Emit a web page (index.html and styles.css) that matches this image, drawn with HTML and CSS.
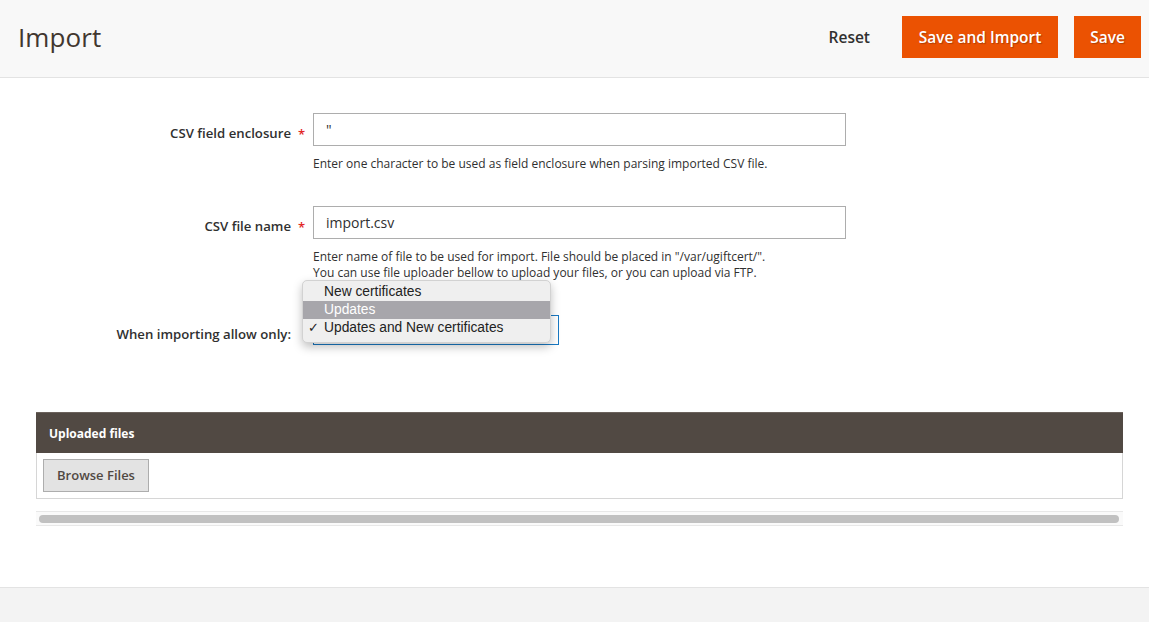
FILE: index.html
```html
<!DOCTYPE html>
<html lang="en">

<head>
    <meta charset="UTF-8">
    <meta name="viewport" content="width=device-width, initial-scale=1.0">
    <title>Import</title>
    <link rel="stylesheet" href="styles.css">
</head>

<body>
    <div id="page-header">
        <h1 class="page-title">Import</h1>
        <div class="page-actions">
            <span class="action-reset">Reset</span>
            <span class="action-primary">Save and Import</span>
            <span class="action-primary action-save">Save</span>
        </div>
    </div>

    <div id="content">
        <div class="field">
            <label class="field-label required">CSV field enclosure</label>
            <div class="field-control">
                <div class="input-text">"</div>
                <div class="note">Enter one character to be used as field enclosure when parsing imported CSV file.</div>
            </div>
        </div>

        <div class="field">
            <label class="field-label required">CSV file name</label>
            <div class="field-control">
                <div class="input-text">import.csv</div>
                <div class="note">Enter name of file to be used for import. File should be placed in "/var/ugiftcert/".<br>
                    You can use file uploader bellow to upload your files, or you can upload via FTP.</div>
            </div>
        </div>

        <div class="field field-select">
            <label class="field-label">When importing allow only:</label>
            <div class="field-control">
                <div class="select">
                    <ul class="select-menu">
                        <li>New certificates</li>
                        <li class="hover">Updates</li>
                        <li class="checked">Updates and New certificates</li>
                    </ul>
                </div>
            </div>
        </div>

        <div class="uploader">
            <div class="uploader-head">Uploaded files</div>
            <div class="uploader-body">
                <span class="btn-browse">Browse Files</span>
            </div>
            <div class="scroll-track">
                <div class="scroll-thumb"></div>
            </div>
        </div>
    </div>

    <div id="footer"></div>
</body>

</html>
```

FILE: styles.css
```css
* {
    margin: 0;
    padding: 0;
    box-sizing: border-box;
}

ul {
    list-style: none;
}

body {
    font-family: "Open Sans", "Liberation Sans", sans-serif;
    color: #303030;
    background: #fff;
    width: 1149px;
    height: 622px;
    overflow: hidden;
    display: flex;
    flex-direction: column;
}

#page-header {
    height: 78px;
    background: #f8f8f8;
    border-bottom: 1px solid #e3e3e3;
    display: flex;
    align-items: center;
    justify-content: space-between;
    padding: 0 8px 4px 18px;
}

.page-title {
    font-size: 26px;
    font-weight: 400;
    color: #41362f;
    letter-spacing: 0.1px;
}

.page-actions {
    display: flex;
    align-items: center;
}

.action-reset {
    font-size: 15.5px;
    font-weight: 600;
    color: #303030;
    margin-right: 32px;
}

.action-primary {
    display: inline-block;
    height: 42px;
    line-height: 42px;
    width: 156px;
    text-align: center;
    background: #eb5202;
    color: #fff;
    font-size: 15.5px;
    font-weight: 600;
    text-shadow: 1px 1px 1px rgba(0, 0, 0, 0.25);
}

.action-save {
    margin-left: 16px;
    width: 67px;
}

#content {
    flex: 1;
    padding: 35px 26px 0 36px;
}

.field {
    display: flex;
    margin-bottom: 34px;
}

.field-label {
    position: relative;
    width: 277px;
    padding-right: 22px;
    padding-top: 4px;
    text-align: right;
    font-size: 13.2px;
    font-weight: 600;
    line-height: 33px;
}

.field-label.required::after {
    content: "*";
    position: absolute;
    right: 8px;
    top: 5px;
    color: #e22626;
    font-size: 13px;
}

.field-control {
    width: 533px;
}

.input-text {
    height: 33px;
    border: 1px solid #adadad;
    padding: 0 12px;
    font-size: 14px;
    line-height: 31px;
}

.note {
    margin-top: 10px;
    font-size: 12px;
    line-height: 16px;
}

.field-select {
    margin-bottom: 0;
}

.field-select .field-label {
    padding-top: 3px;
}

.field-select .field-control {
    width: 246px;
}

.select {
    position: relative;
    width: 246px;
    height: 30px;
    border: 1px solid #1979c3;
}

.select-menu {
    position: absolute;
    left: -12px;
    top: -36px;
    width: 249px;
    padding: 2px 0 5px;
    background: #efefef;
    border: 1px solid #d2d2d2;
    border-radius: 5px;
    box-shadow: 0 4px 10px rgba(0, 0, 0, 0.25);
    font-family: "Liberation Sans", "Helvetica", sans-serif;
    font-size: 13.8px;
    color: #222;
}

.select-menu li {
    height: 18px;
    line-height: 18px;
    padding-left: 21px;
    position: relative;
}

.select-menu .hover {
    background: #a7a6ab;
    color: #fff;
}

.select-menu .checked::before {
    content: "\2713";
    position: absolute;
    left: 5px;
    top: 0;
    font-size: 13px;
}

.uploader {
    margin-top: 61px;
    width: 1087px;
}

.uploader-head {
    height: 41px;
    line-height: 41px;
    background: #514943;
    border-top: 1px solid #6b625c;
    color: #fff;
    font-size: 12px;
    font-weight: 700;
    padding-left: 13px;
}

.uploader-body {
    height: 46px;
    border: 1px solid #d6d6d6;
    border-top: 0;
    padding: 6px 0 0 6px;
}

.btn-browse {
    display: inline-block;
    width: 106px;
    height: 33px;
    line-height: 31px;
    text-align: center;
    background: #e3e3e3;
    border: 1px solid #adadad;
    font-size: 13px;
    font-weight: 600;
    color: #514943;
}

.scroll-track {
    margin-top: 12px;
    height: 15px;
    background: #fafafa;
    border-top: 1px solid #e8e8e8;
    border-bottom: 1px solid #e8e8e8;
    padding: 3px 4px 0 3px;
}

.scroll-thumb {
    height: 8px;
    background: #c1c1c1;
    border-radius: 4px;
}

#footer {
    height: 35px;
    background: #f3f3f3;
    border-top: 1px solid #e3e3e3;
}
```
